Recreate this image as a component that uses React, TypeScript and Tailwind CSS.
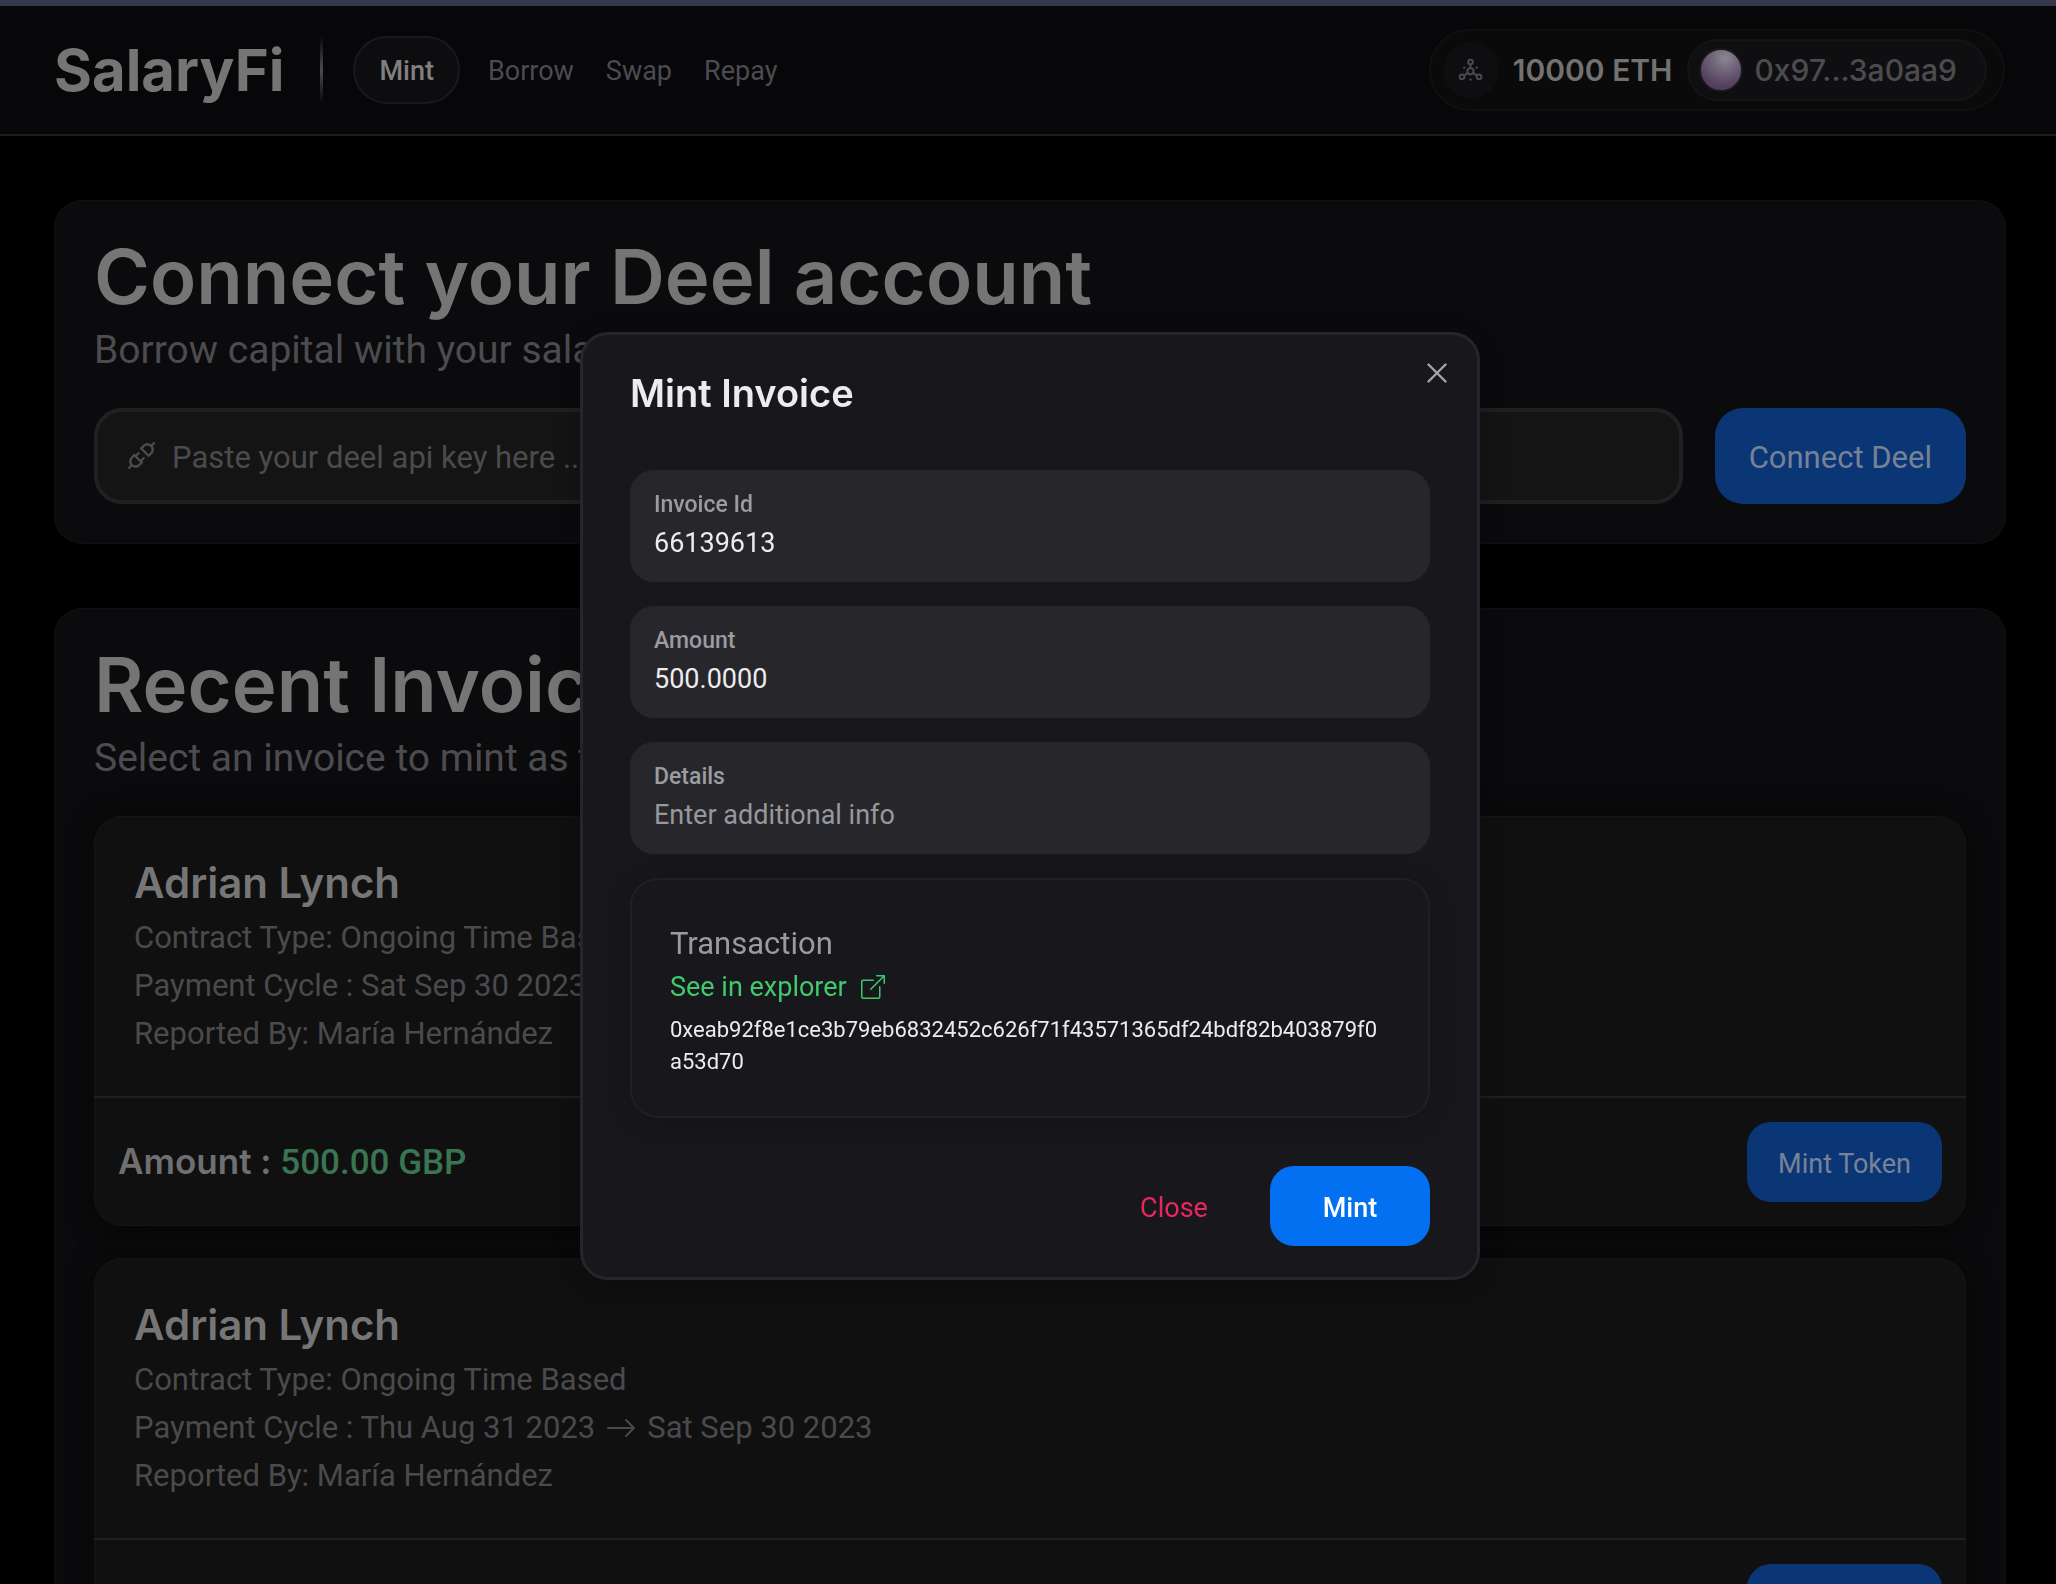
import type { ReactNode } from "react";
import { BsArrowRight, BsBoxArrowUpRight } from "react-icons/bs";
import { VscDebugDisconnect } from "react-icons/vsc";

type Invoice = { name: string; contract: string; from: string; to: string; reporter: string; amount: string };

const invoices: Invoice[] = [
  {
    name: "Adrian Lynch",
    contract: "Ongoing Time Based",
    from: "Sat Sep 30 2023",
    to: "Tue Oct 31 2023",
    reporter: "María Hernández",
    amount: "500.00 GBP",
  },
  {
    name: "Adrian Lynch",
    contract: "Ongoing Time Based",
    from: "Thu Aug 31 2023",
    to: "Sat Sep 30 2023",
    reporter: "María Hernández",
    amount: "500.00 GBP",
  },
];

function NetworkIcon() {
  return (
    <svg viewBox="0 0 25 25" className="size-[25px]" fill="none" stroke="currentColor" strokeWidth="2" aria-hidden="true">
      <circle cx="12.5" cy="13.3" r="3.1" />
      <circle cx="12.5" cy="4" r="2.3" />
      <circle cx="4" cy="18.8" r="2.4" />
      <circle cx="21" cy="18.8" r="2.4" />
      <path d="M12.5 6.3v4M9.9 14.9l-3.7 2.4M15.1 14.9l3.7 2.4" />
      <g fill="currentColor" stroke="none">
        <circle cx="6.2" cy="9.6" r="1.2" />
        <circle cx="18.8" cy="9.6" r="1.2" />
        <circle cx="12.5" cy="21.6" r="1.2" />
      </g>
    </svg>
  );
}

function Header() {
  return (
    <header className="flex h-[130px] items-center justify-between border-b-2 border-[#1c1c1f] bg-[#070709] pl-[54px] pr-[51px]">
      <div className="flex items-center">
        <span className="font-['Inter',sans-serif] text-[58px] leading-[64px] font-bold text-[#757575]">SalaryFi</span>
        <span className="ml-9 h-[68px] w-[3px] bg-linear-to-b from-transparent via-[#4c4c4e] to-transparent" />
        <nav className="ml-[30px] flex items-center gap-8 text-[27px] leading-9 text-[#4b4b50]">
          <a href="#mint" className="-mr-1 flex h-[68px] items-center rounded-[34px] border-2 border-[#1a1a1c] bg-[#0d0d0f] px-6 pt-0.5 font-medium text-[#808080]">
            Mint
          </a>
          <a href="#borrow" className="pt-0.5">Borrow</a>
          <a href="#swap" className="pt-0.5">Swap</a>
          <a href="#repay" className="pt-0.5">Repay</a>
        </nav>
      </div>
      <div className="flex h-[82px] items-center rounded-full border-2 border-[#101011] bg-[#0a0a0a] pl-3 pr-4 font-['Inter',sans-serif] text-[30px] leading-9">
        <span className="flex size-14 items-center justify-center rounded-full bg-[#0e0e10] text-[#4a4a4c]">
          <NetworkIcon />
        </span>
        <span className="ml-3.5 font-semibold text-[#727272]">10000 ETH</span>
        <button className="ml-3.5 flex h-[62px] items-center rounded-full border-2 border-[#141416] bg-[#0f0f11] pl-2.5 pr-7 font-medium text-[#4b4c4e]">
          <span className="size-11 rounded-full border-2 border-[#19191c] bg-[radial-gradient(circle_at_60%_20%,#8b8791_0%,#6c5d76_40%,#54405f_70%,#4a3654_100%)]" />
          <span className="ml-3">0x97...3a0aa9</span>
        </button>
      </div>
    </header>
  );
}

function Panel({ title, subtitle, children }: { title: string; subtitle: string; children: ReactNode }) {
  return (
    <section className="rounded-[28px] bg-[#0b0b0d] p-10 ring-1 ring-[#101012] ring-inset">
      <h1 className="font-['Inter',sans-serif] text-[76px] leading-[72px] font-semibold text-[#757575]">{title}</h1>
      <p className="mt-2 mb-7 text-[39px] leading-[60px] text-[#4c4c50]">{subtitle}</p>
      {children}
    </section>
  );
}

function InvoiceCard({ invoice }: { invoice: Invoice }) {
  return (
    <article className="rounded-[28px] bg-[#101010] shadow-[0_2px_28px_rgba(0,0,0,0.6)] ring-1 ring-[#151517] ring-inset">
      <div className="px-10 pt-10 pb-[38px] text-[31px] leading-[48px] text-[#4a4a4d]">
        <h2 className="mb-1 font-['Inter',sans-serif] text-[42px] leading-[54px] font-semibold text-[#767676]">{invoice.name}</h2>
        <p>Contract Type: {invoice.contract}</p>
        <p className="flex items-center">
          <span>Payment Cycle : {invoice.from}</span>
          <BsArrowRight className="mx-2.5 size-8" />
          <span>{invoice.to}</span>
        </p>
        <p>Reported By: {invoice.reporter}</p>
      </div>
      <div className="flex items-center justify-between border-t-2 border-[#1f1f20] p-6">
        <p className="font-['Inter',sans-serif] text-[35px] leading-10 font-semibold text-[#6f6f70]">
          Amount : <span className="font-['Roboto',sans-serif] font-medium text-[#3a7552]">{invoice.amount}</span>
        </p>
        <button className="h-20 rounded-[24px] bg-[#0a3676] px-[31px] pt-1 text-[27px] text-[#778296]">Mint Token</button>
      </div>
    </article>
  );
}

function Field({ id, label, value, placeholder }: { id: string; label: string; value?: string; placeholder?: string }) {
  return (
    <div className="flex h-28 flex-col rounded-[24px] bg-[#27272b] px-6 pt-5 pb-4">
      <label htmlFor={id} className="text-[23px] leading-[30px] font-medium text-[#9b9ba2]">
        {label}
      </label>
      <input
        id={id}
        defaultValue={value}
        placeholder={placeholder}
        className="h-[46px] w-full bg-transparent text-[27px] text-[#ececee] outline-none placeholder:text-[#97979e]"
      />
    </div>
  );
}

function MintDialog() {
  return (
    <div className="fixed inset-0 flex items-center justify-center pt-7 pl-1">
      <div
        role="dialog"
        aria-modal="true"
        aria-labelledby="dialog-title"
        className="relative w-[900px] rounded-[28px] border-3 border-[#26262a] bg-[#18181c] px-[47px] pt-[38px] pb-[31px] shadow-[0_4px_24px_rgba(0,0,0,0.3)]"
      >
        <button aria-label="Close dialog" className="absolute top-[18px] right-5 flex size-10 items-center justify-center text-[#a4a4ab]">
          <svg viewBox="0 0 20 20" className="size-5" fill="none" stroke="currentColor" strokeWidth="2.4" strokeLinecap="round" aria-hidden="true">
            <path d="M1.5 1.5l17 17M18.5 1.5l-17 17" />
          </svg>
        </button>
        <h2 id="dialog-title" className="font-['Inter',sans-serif] text-[38px] leading-10 font-semibold text-[#ececee]">
          Mint Invoice
        </h2>
        <div className="mt-[57px] flex flex-col gap-6">
          <Field id="invoice-id" label="Invoice Id" value="66139613" />
          <Field id="amount" label="Amount" value="500.0000" />
          <Field id="details" label="Details" placeholder="Enter additional info" />
          <div className="rounded-[28px] py-10 pl-10 pr-11 shadow-[0_4px_28px_rgba(0,0,0,0.2)] ring-2 ring-[#202023] ring-inset">
            <p className="text-[31px] leading-[52px] text-[#9a9aa0]">Transaction</p>
            <a href="#explorer" className="flex items-center gap-3.5 text-[27px] leading-[34px] text-[#3fc96c]">
              See in explorer
              <BsBoxArrowUpRight className="size-6" />
            </a>
            <p className="mt-2.5 text-[22px] leading-8 break-all text-[#ececee]">
              0xeab92f8e1ce3b79eb6832452c626f71f43571365df24bdf82b403879f0a53d70
            </p>
          </div>
        </div>
        <div className="mt-12 flex justify-end gap-6 text-[27px]">
          <button className="h-20 w-36 rounded-[24px] pt-1 text-[#ea2660]">Close</button>
          <button className="h-20 w-40 rounded-[24px] bg-[#0270f0] pt-1 font-medium text-white">Mint</button>
        </div>
      </div>
    </div>
  );
}

export default function App() {
  return (
    <div className="h-screen overflow-hidden bg-black font-['Roboto',sans-serif]">
      <div className="h-1.5 bg-[#35374a]" />
      <Header />
      <main className="flex flex-col gap-16 pt-16 pl-[54px] pr-[50px]">
        <Panel title="Connect your Deel account" subtitle="Borrow capital with your salary as collateral">
          <form className="flex gap-8">
            <label className="flex h-24 flex-1 items-center gap-3.5 rounded-[28px] border-4 border-[#202022] bg-[#141414] px-7 text-[#4f4f53]">
              <VscDebugDisconnect className="size-8 shrink-0" stroke="currentColor" strokeWidth="0.3" />
              <input
                aria-label="Deel API key"
                placeholder="Paste your deel api key here ..."
                className="min-w-0 flex-1 bg-transparent pt-1 text-[31px] outline-none placeholder:text-[#4b4b4e]"
              />
            </label>
            <button type="button" className="h-24 rounded-[28px] bg-[#0a3676] px-[34px] pt-1 text-[31px] text-[#778296]">
              Connect Deel
            </button>
          </form>
        </Panel>
        <Panel title="Recent Invoices" subtitle="Select an invoice to mint as token">
          <div className="flex flex-col gap-8">
            {invoices.map((invoice) => (
              <InvoiceCard key={invoice.from} invoice={invoice} />
            ))}
          </div>
        </Panel>
      </main>
      <MintDialog />
    </div>
  );
}
